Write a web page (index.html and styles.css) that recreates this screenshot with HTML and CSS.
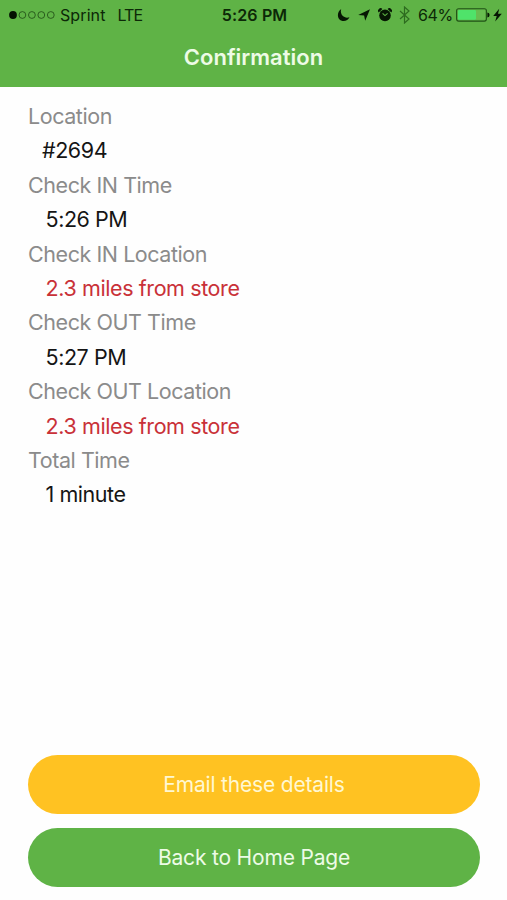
FILE: index.html
```
<!DOCTYPE html>
<html lang="en">
<head>
<meta charset="utf-8">
<title>Confirmation</title>
<link rel="stylesheet" href="styles.css">
</head>
<body>
<div class="screen">
  <header class="header">
    <div class="status">
      <div class="carrier">
        <svg class="signal" width="47" height="10" viewBox="0 0 47 10"><circle class="full" cx="5" cy="5" r="3.9"/><circle cx="14.4" cy="5" r="3.4"/><circle cx="23.9" cy="5" r="3.4"/><circle cx="33.3" cy="5" r="3.4"/><circle cx="42.8" cy="5" r="3.4"/></svg>
        <span class="name">Sprint</span>
        <span class="network">LTE</span>
      </div>
      <span class="clock">5:26 PM</span>
      <div class="indicators">
        <svg width="13" height="14" viewBox="0 0 13 14"><path d="M4.2 1C-.6 4.2-.2 11.8 5.5 12.9c3 .5 5.8-.9 7-3.7C7.4 11 2.5 7 4.2 1z"/></svg>
        <svg class="arrow" width="12" height="14" viewBox="0 0 12 14"><path d="M12 1.3 7.2 12.8 6.1 7.4.2 6.9z"/></svg>
        <svg class="alarm" width="14" height="14" viewBox="0 0 14 14"><circle cx="7" cy="7.4" r="5.8"/><path d="M.7 4.4A2.3 2.3 0 0 1 4.4 1.1zM13.3 4.4A2.3 2.3 0 0 0 9.6 1.1z"/><path class="hands" d="M4.6 5.3 7 7.6 9.6 5.4"/></svg>
        <svg class="bluetooth" width="11" height="18" viewBox="0 0 11 18"><path d="M1 5l9 8-4.5 4V1L10 5l-9 8"/></svg>
        <span class="percent">64%</span>
        <svg class="battery" width="34" height="14" viewBox="0 0 34 14"><rect class="case" x=".6" y=".7" width="29.8" height="12.4" rx="2"/><rect class="charge" x="2" y="2.1" width="18" height="9.6" rx="1"/><rect class="rest" x="20" y="2.1" width="9" height="9.6"/><path d="M31.4 4.5q2.2.4 2.2 2.5t-2.2 2.5z"/></svg>
        <svg class="bolt" width="9" height="14" viewBox="0 0 9 14"><path d="M6.2.8.2 8h3.5l-1.5 5.4L8.8 5.8H5z"/></svg>
      </div>
    </div>
    <h1 class="title">Confirmation</h1>
  </header>
  <main class="details">
    <dl class="list">
      <dt>Location</dt><dd class="store">#2694</dd>
      <dt>Check IN Time</dt><dd>5:26 PM</dd>
      <dt>Check IN Location</dt><dd class="alert">2.3 miles from store</dd>
      <dt>Check OUT Time</dt><dd>5:27 PM</dd>
      <dt>Check OUT Location</dt><dd class="alert">2.3 miles from store</dd>
      <dt>Total Time</dt><dd>1 minute</dd>
    </dl>
  </main>
  <footer class="actions">
    <button class="button email" type="button">Email these details</button>
    <button class="button home" type="button">Back to Home Page</button>
  </footer>
</div>
</body>
</html>
```
FILE: styles.css
```
* { box-sizing: border-box; }
body { margin: 0; background: #fefefe; font-family: Inter, "Liberation Sans", sans-serif; }
.screen { height: 900px; display: flex; flex-direction: column; }
.header { height: 87px; background: #5fb346; }
.status { height: 29px; display: grid; grid-template-columns: 1fr auto 1fr; align-items: center; padding: 0 6px 0 8px; color: #0c2807; font-size: 16px; white-space: nowrap; }
.carrier, .indicators { display: flex; align-items: center; }
.signal { fill: none; stroke: #1d4713; stroke-width: .8; }
.signal .full { fill: #041002; stroke: none; }
.name { margin-left: 5px; letter-spacing: .1px; }
.network { margin-left: 12px; letter-spacing: -.9px; }
.clock { font-weight: 600; letter-spacing: .15px; }
.indicators { justify-content: flex-end; fill: #061603; }
.arrow { margin-left: 8px; }
.alarm { margin-left: 8px; }
.hands { fill: none; stroke: #5fb346; stroke-width: 1.1; }
.bluetooth { margin-left: 7px; fill: none; stroke: #2d6b1f; stroke-width: 1.2; }
.percent { margin-left: 8px; letter-spacing: -.3px; }
.battery { margin-left: 3px; }
.case { fill: none; stroke: #215217; stroke-width: 1.1; }
.charge { fill: #4fe36a; }
.rest { fill: #68bd50; }
.bolt { margin: 0 -1px 0 3px; }
.title { margin: 0; height: 57px; line-height: 57px; text-align: center; color: #edfbe6; font-size: 22px; font-weight: 600; }
.details { flex: 1; padding: 12px 28px 0; }
.list { margin: 0; font-size: 21.5px; line-height: 34.4px; letter-spacing: -.44px; }
.list dt { color: #8b8b8b; }
.list dd { margin: 0 0 0 17.5px; color: #151515; }
.list .store { margin-left: 14px; }
.list .alert { color: #c93138; letter-spacing: -.4px; }
.actions { display: flex; flex-direction: column; gap: 14px; padding: 0 27px 13.5px 28px; }
.button { height: 59px; border: 0; padding: 1px 0 0; border-radius: 30px; font: 400 21px Inter, "Liberation Sans", sans-serif; letter-spacing: -.18px; }
.email { background: #ffc222; color: #fff8d2; }
.home { background: #5fb346; color: #edfbe6; }
```
